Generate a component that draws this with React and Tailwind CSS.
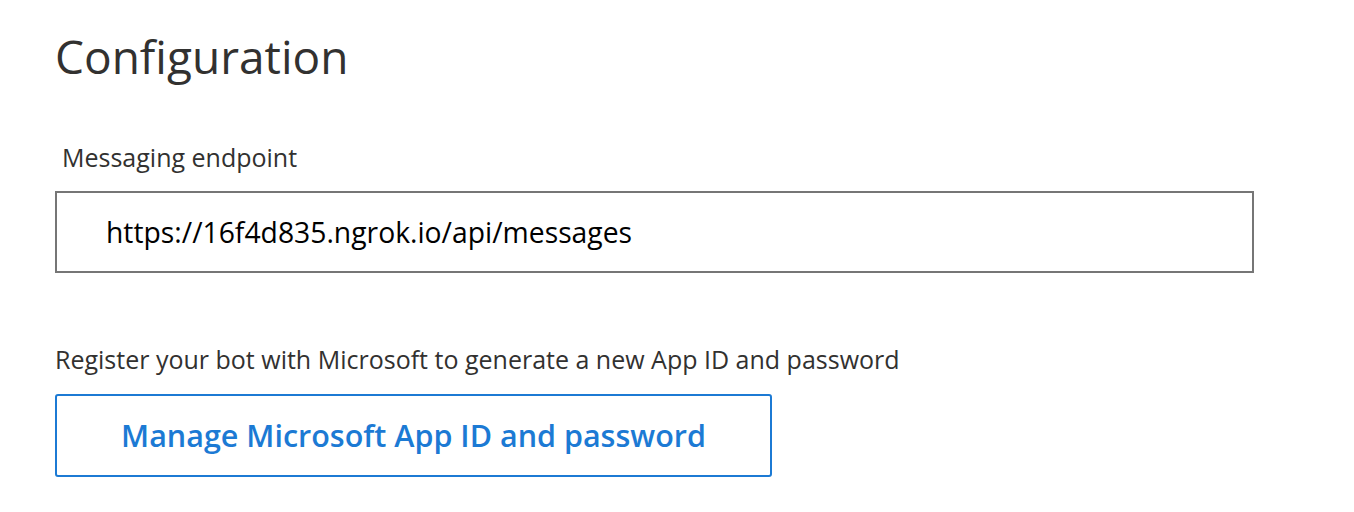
export default function App() {
  return (
    <div className="w-[1354px] h-[512px] bg-white pl-[55px] pt-[26px] font-['Open_Sans',sans-serif] text-[#323130]">
      <h1 className="text-[46px] leading-[60px] font-normal">Configuration</h1>

      <div className="mt-[55px]">
        <label className="block pl-[7px] text-[25px] leading-[32px]">Messaging endpoint</label>
        <div className="mt-[18px] w-[1199px] h-[82px] border-2 border-[#767676] flex items-center pl-[49px] text-[28.3px] text-black">
          https://16f4d835.ngrok.io/api/messages
        </div>
      </div>

      <p className="mt-[70px] text-[25px] leading-[32px]">
        Register your bot with Microsoft to generate a new App ID and password
      </p>
      <button className="mt-[19px] w-[717px] h-[83px] border-2 border-[#1c7ad4] rounded-[3px] text-[#1c7ad4] text-[30.5px] font-semibold flex items-center justify-center">
        Manage Microsoft App ID and password
      </button>
    </div>
  );
}
